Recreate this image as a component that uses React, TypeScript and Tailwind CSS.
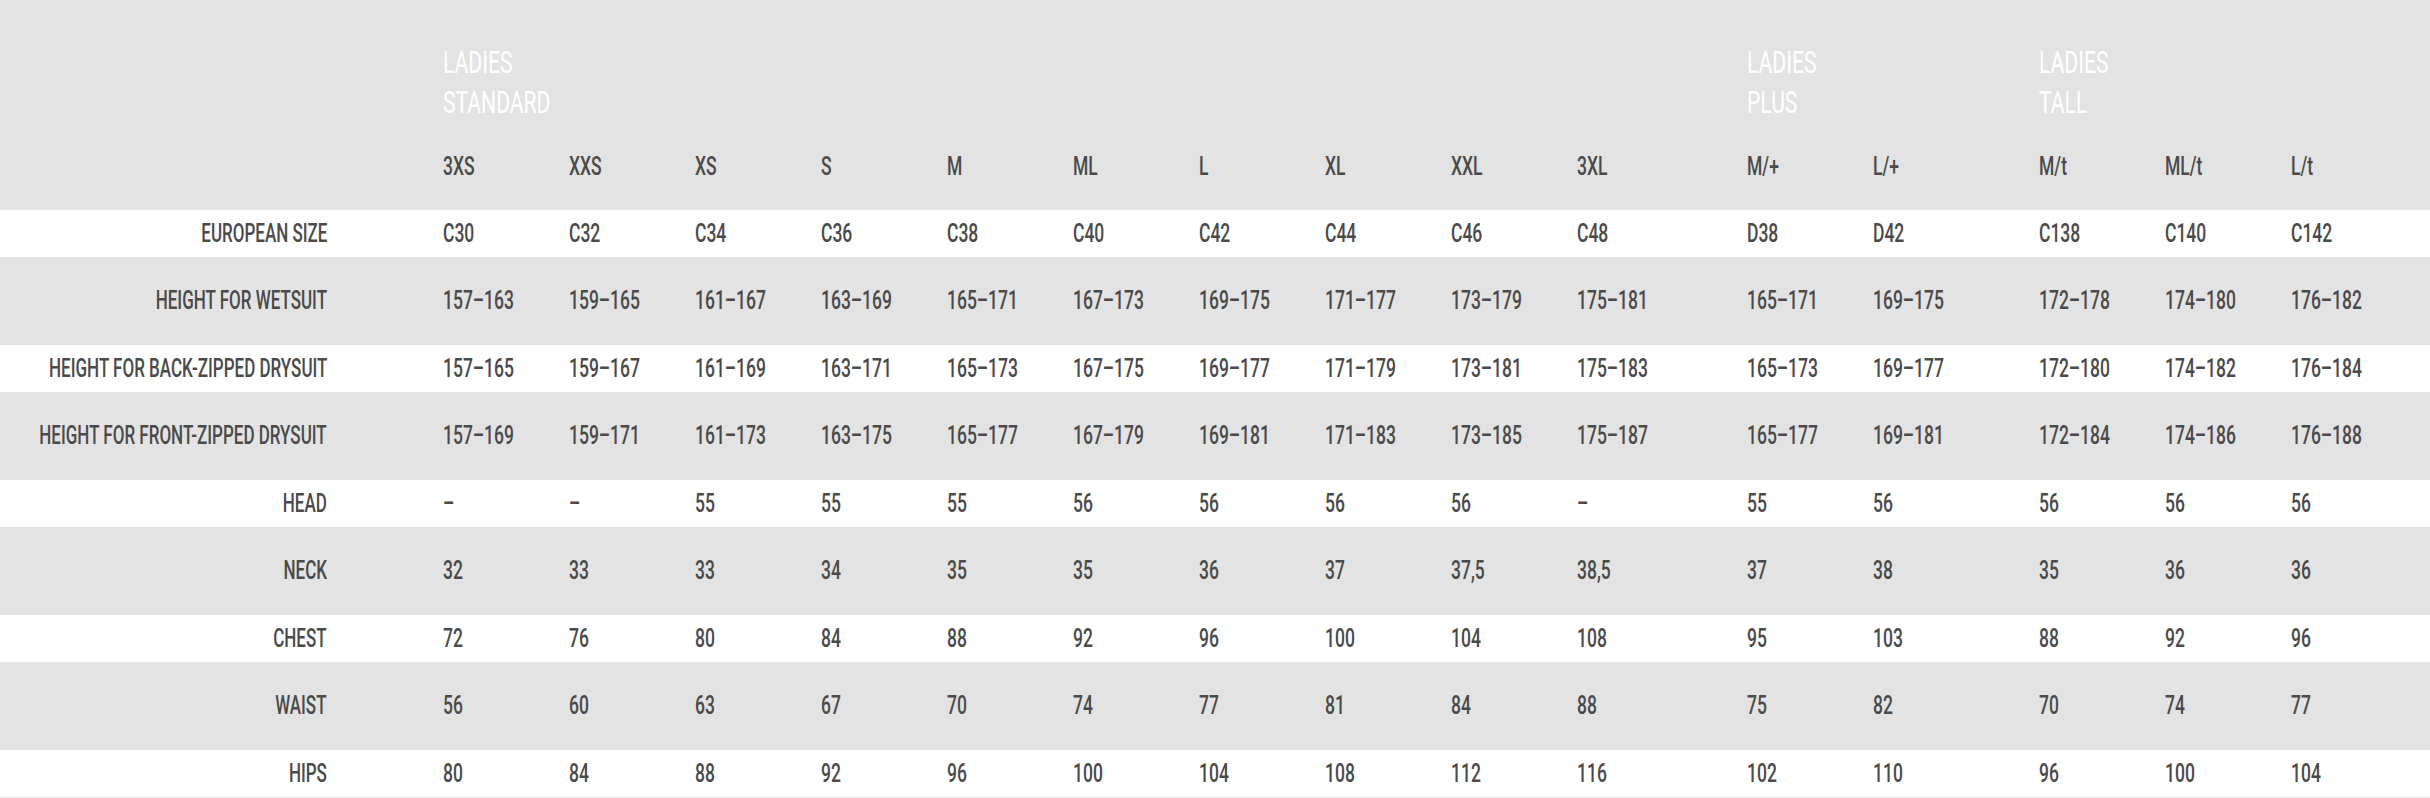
const FONT = 'font-["Roboto","Liberation_Sans",sans-serif]';

type Group = { title: string[]; sizes: string[]; gap: string };

const groups: Group[] = [
  {
    title: ['LADIES', 'STANDARD'],
    sizes: ['3XS', 'XXS', 'XS', 'S', 'M', 'ML', 'L', 'XL', 'XXL', '3XL'],
    gap: 'ml-0',
  },
  { title: ['LADIES', 'PLUS'], sizes: ['M/+', 'L/+'], gap: 'ml-[44px]' },
  { title: ['LADIES', 'TALL'], sizes: ['M/t', 'ML/t', 'L/t'], gap: 'ml-[40px]' },
];

type Row = { label: string; values: string[][]; tall: boolean };

const rows: Row[] = [
  {
    label: 'EUROPEAN SIZE',
    tall: false,
    values: [
      ['C30', 'C32', 'C34', 'C36', 'C38', 'C40', 'C42', 'C44', 'C46', 'C48'],
      ['D38', 'D42'],
      ['C138', 'C140', 'C142'],
    ],
  },
  {
    label: 'HEIGHT FOR WETSUIT',
    tall: true,
    values: [
      ['157–163', '159–165', '161–167', '163–169', '165–171', '167–173', '169–175', '171–177', '173–179', '175–181'],
      ['165–171', '169–175'],
      ['172–178', '174–180', '176–182'],
    ],
  },
  {
    label: 'HEIGHT FOR BACK-ZIPPED DRYSUIT',
    tall: false,
    values: [
      ['157–165', '159–167', '161–169', '163–171', '165–173', '167–175', '169–177', '171–179', '173–181', '175–183'],
      ['165–173', '169–177'],
      ['172–180', '174–182', '176–184'],
    ],
  },
  {
    label: 'HEIGHT FOR FRONT-ZIPPED DRYSUIT',
    tall: true,
    values: [
      ['157–169', '159–171', '161–173', '163–175', '165–177', '167–179', '169–181', '171–183', '173–185', '175–187'],
      ['165–177', '169–181'],
      ['172–184', '174–186', '176–188'],
    ],
  },
  {
    label: 'HEAD',
    tall: false,
    values: [
      ['–', '–', '55', '55', '55', '56', '56', '56', '56', '–'],
      ['55', '56'],
      ['56', '56', '56'],
    ],
  },
  {
    label: 'NECK',
    tall: true,
    values: [
      ['32', '33', '33', '34', '35', '35', '36', '37', '37,5', '38,5'],
      ['37', '38'],
      ['35', '36', '36'],
    ],
  },
  {
    label: 'CHEST',
    tall: false,
    values: [
      ['72', '76', '80', '84', '88', '92', '96', '100', '104', '108'],
      ['95', '103'],
      ['88', '92', '96'],
    ],
  },
  {
    label: 'WAIST',
    tall: true,
    values: [
      ['56', '60', '63', '67', '70', '74', '77', '81', '84', '88'],
      ['75', '82'],
      ['70', '74', '77'],
    ],
  },
  {
    label: 'HIPS',
    tall: false,
    values: [
      ['80', '84', '88', '92', '96', '100', '104', '108', '112', '116'],
      ['102', '110'],
      ['96', '100', '104'],
    ],
  },
];

// the source font is a very condensed grotesk; Roboto squeezed horizontally
function Narrow({ children, right }: { children: React.ReactNode; right?: boolean }) {
  return (
    <span
      className={`inline-block shrink-0 whitespace-nowrap ${
        right ? 'origin-right scale-x-[0.68]' : 'origin-left scale-x-[0.7]'
      }`}
    >
      {children}
    </span>
  );
}

function Title({ children }: { children: React.ReactNode }) {
  return (
    <span className="inline-block whitespace-nowrap origin-left scale-x-[0.66]">{children}</span>
  );
}

function HeaderRow() {
  return (
    <div className="flex h-[210px] bg-[#e3e3e3]">
      <div className="w-[443px] shrink-0" />
      {groups.map((g) => (
        <div key={g.sizes[0]} className={`flex flex-col ${g.gap}`}>
          <div className="pt-[42px] h-[124px] text-[32px] leading-[40px] font-normal text-white">
            {g.title.map((t) => (
              <div key={t}>
                <Title>{t}</Title>
              </div>
            ))}
          </div>
          <div className="flex mt-[28px] text-[25px] leading-[30px] font-medium text-[#4a4a4a]">
            {g.sizes.map((s) => (
              <div key={s} className="w-[126px]">
                <Narrow>{s}</Narrow>
              </div>
            ))}
          </div>
        </div>
      ))}
    </div>
  );
}

function DataRow({ row }: { row: Row }) {
  return (
    <div
      className={`flex items-center text-[25px] leading-[30px] font-medium text-[#4a4a4a] ${
        row.tall ? 'h-[88px] bg-[#e3e3e3]' : 'h-[47px] bg-white'
      }`}
    >
      <div className="flex w-[443px] shrink-0 justify-end pr-[116px]">
        <Narrow right>{row.label}</Narrow>
      </div>
      {row.values.map((vals, gi) => (
        <div key={gi} className={`flex ${groups[gi].gap}`}>
          {vals.map((v, i) => (
            <div key={i} className="w-[126px]">
              <Narrow>{v}</Narrow>
            </div>
          ))}
        </div>
      ))}
    </div>
  );
}

export default function App() {
  return (
    <div className={`w-[2430px] h-[798px] overflow-hidden bg-[#e3e3e3] ${FONT}`}>
      <HeaderRow />
      {rows.map((r) => (
        <DataRow key={r.label} row={r} />
      ))}
    </div>
  );
}
